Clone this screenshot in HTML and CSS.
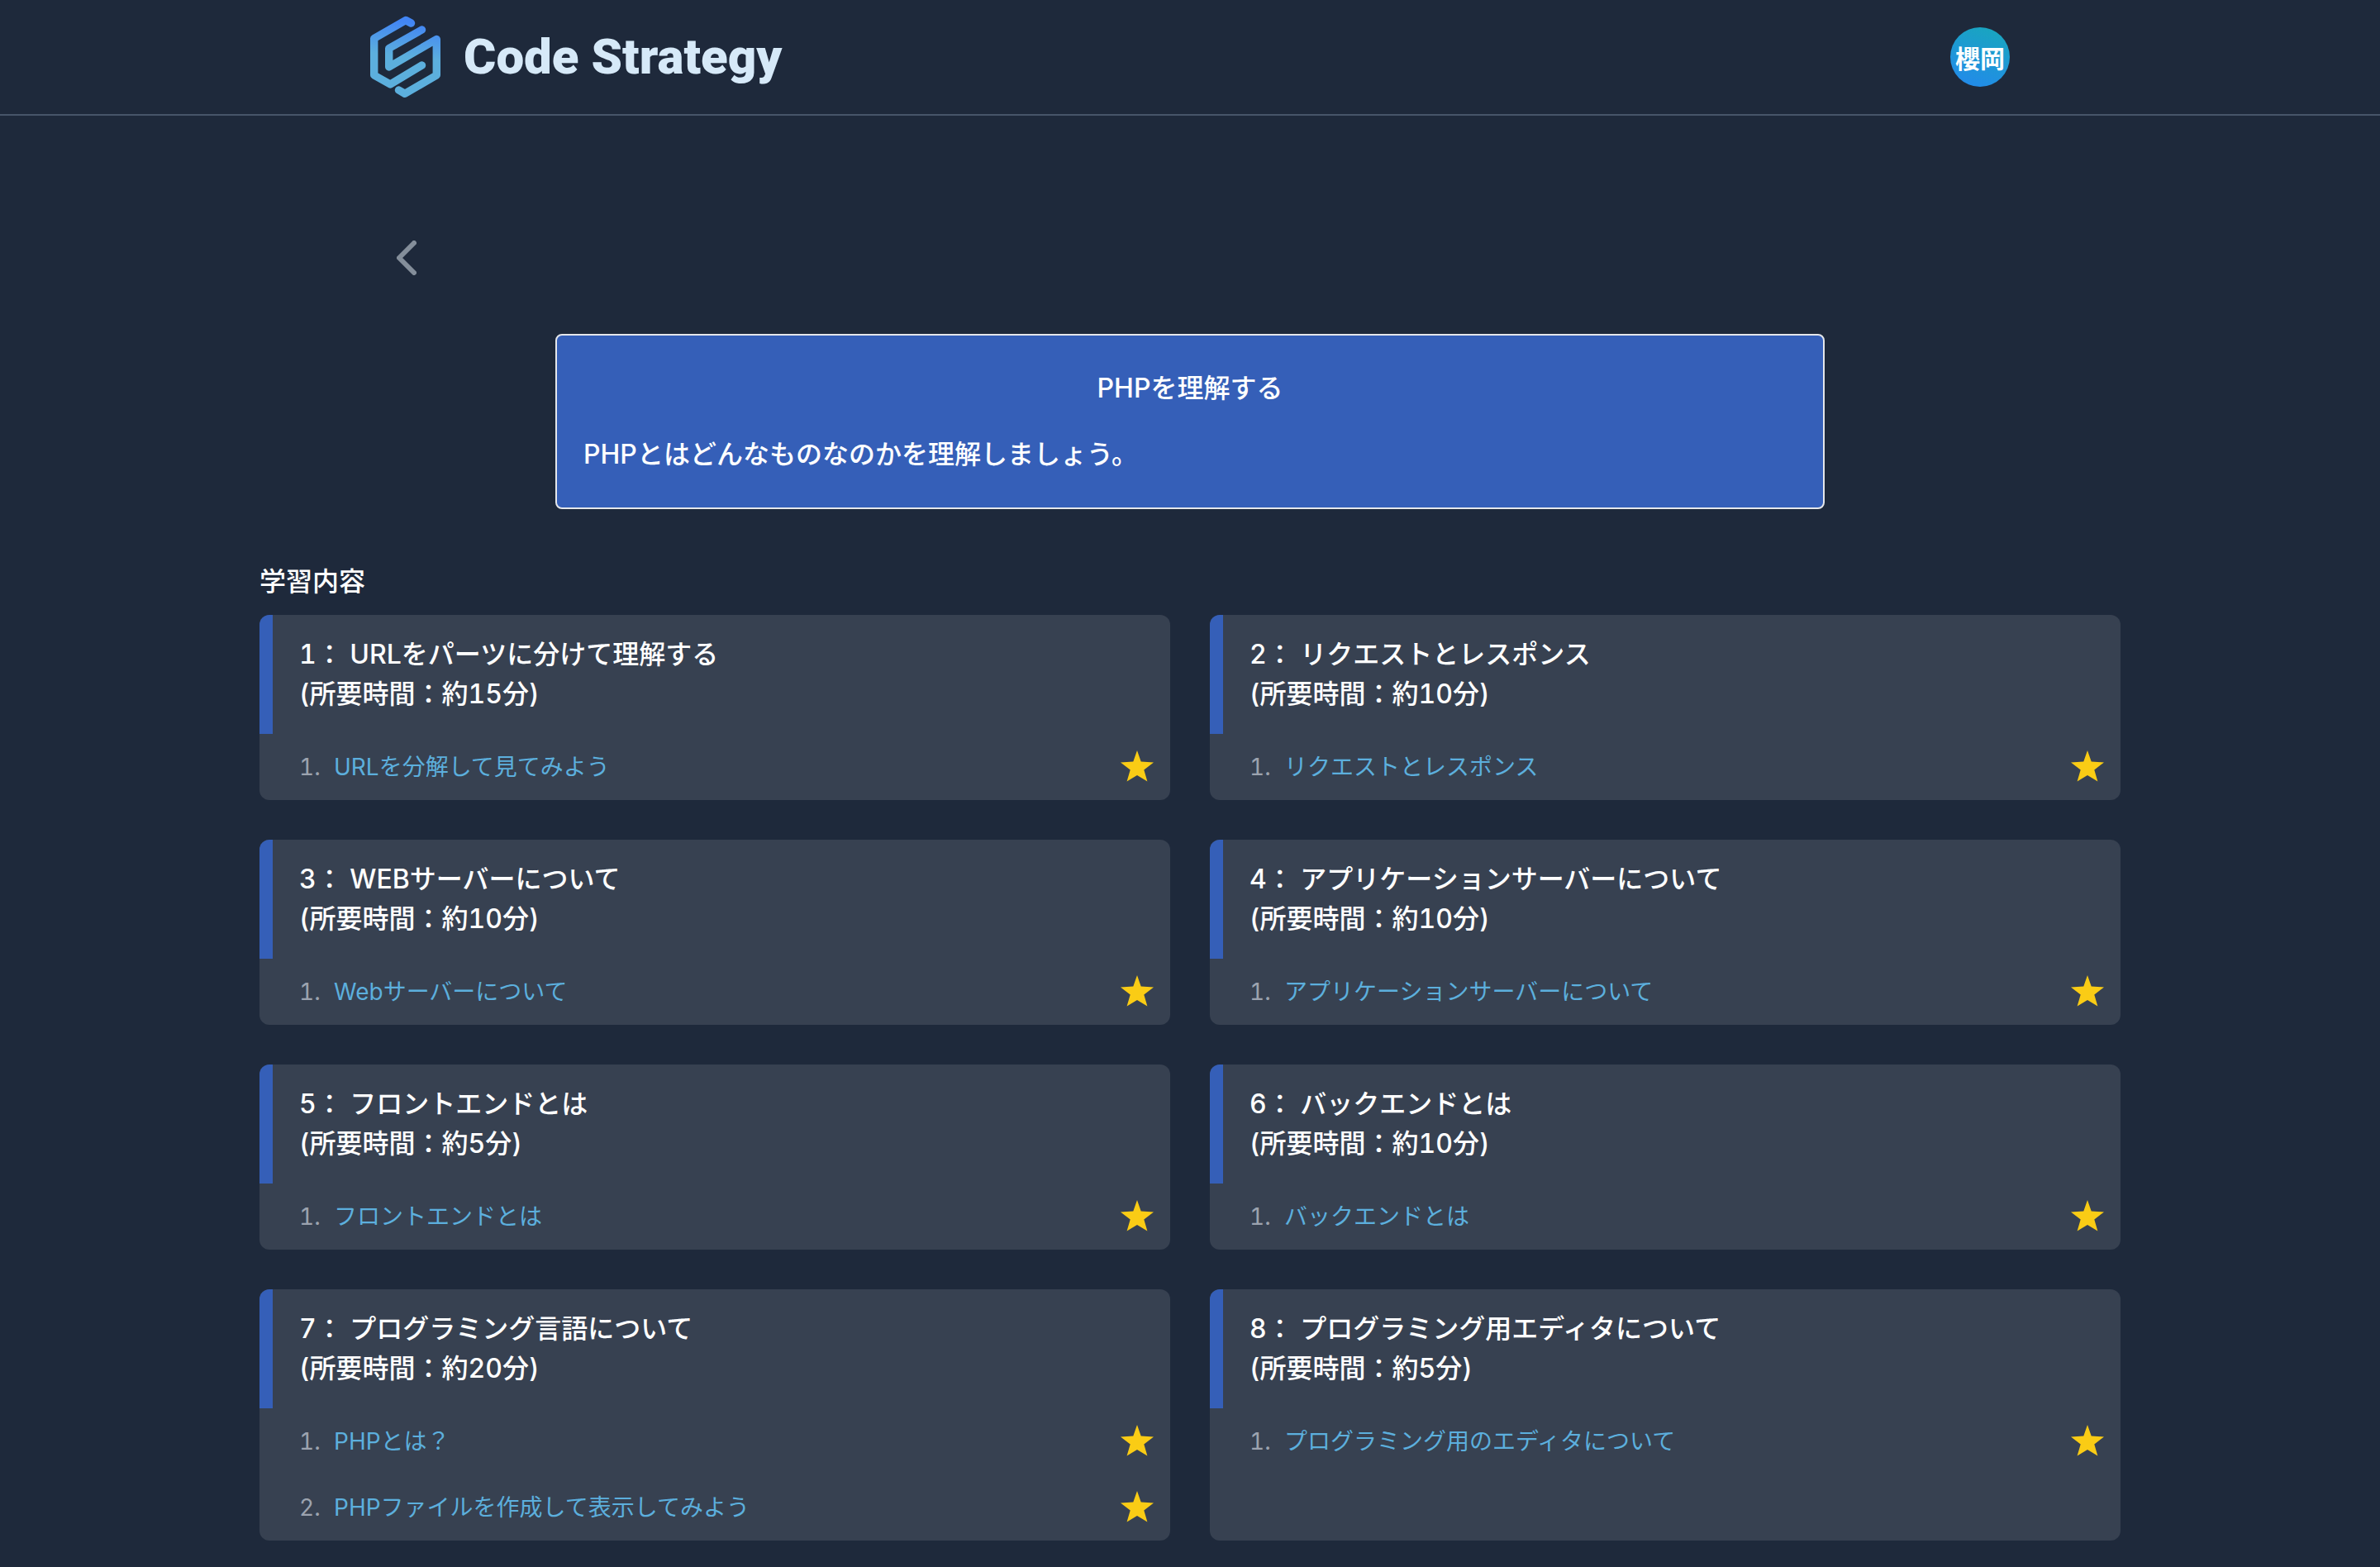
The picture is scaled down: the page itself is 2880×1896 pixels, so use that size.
FILE: index.html
```html
<!DOCTYPE html>
<html lang="ja">
<head>
<meta charset="utf-8">
<meta name="viewport" content="width=device-width, initial-scale=1">
<title>PHPを理解する | Code Strategy</title>
<link rel="stylesheet" href="styles.css">
</head>
<body>
<svg class="sprite" aria-hidden="true">
  <symbol id="star" viewBox="0 0 40 40"><path d="M20 0 24.700 13.600 40 14.400 28.300 23.400 32.400 37.600 20 30 7.600 37.600 11.700 23.400 0 14.400 15.300 13.600Z"/></symbol>
</svg>
<header class="site-header">
  <div class="header-inner">
    <a class="brand" href="#">
      <svg class="brand-mark" viewBox="0 0 85 100" aria-hidden="true">
        <defs><linearGradient id="mark" gradientUnits="userSpaceOnUse" x1="52" y1="0" x2="40" y2="100"><stop offset="0.080" stop-color="#4285f4"/><stop offset="0.500" stop-color="#5cafdd"/><stop offset="1" stop-color="#5cafdd"/></linearGradient></defs>
        <g fill="none" stroke="url(#mark)" stroke-width="9.400" stroke-linejoin="round" stroke-linecap="round">
          <path d="M49.500 9 43 5.500 4.700 27.500V72L24.300 83 62.500 60"/>
          <path d="M62.500 17 22.700 39.500V62L80.300 28.500V72L42 94.300 34.500 90"/>
        </g>
      </svg>
      <span class="brand-name">Code Strategy</span>
    </a>
    <button class="avatar" type="button">櫻岡</button>
  </div>
</header>
<main class="page">
  <nav class="back-row">
    <a class="back" href="#" aria-label="戻る"><svg viewBox="0 0 24 42" aria-hidden="true"><path d="M21 3 3 21 21 39"/></svg></a>
  </nav>
  <section class="intro">
    <h1>PHPを理解する</h1>
    <p>PHPとはどんなものなのかを理解しましょう。</p>
  </section>
  <section class="contents">
    <h2>学習内容</h2>
    <div class="grid">
      <article class="card">
        <h3>1： URLをパーツに分けて理解する<br>(所要時間：約15分)</h3>
        <ol><li><a href="#">URLを分解して見てみよう</a><svg class="star"><use href="#star"/></svg></li></ol>
      </article>
      <article class="card">
        <h3>2： リクエストとレスポンス<br>(所要時間：約10分)</h3>
        <ol><li><a href="#">リクエストとレスポンス</a><svg class="star"><use href="#star"/></svg></li></ol>
      </article>
      <article class="card">
        <h3>3： WEBサーバーについて<br>(所要時間：約10分)</h3>
        <ol><li><a href="#">Webサーバーについて</a><svg class="star"><use href="#star"/></svg></li></ol>
      </article>
      <article class="card">
        <h3>4： アプリケーションサーバーについて<br>(所要時間：約10分)</h3>
        <ol><li><a href="#">アプリケーションサーバーについて</a><svg class="star"><use href="#star"/></svg></li></ol>
      </article>
      <article class="card">
        <h3>5： フロントエンドとは<br>(所要時間：約5分)</h3>
        <ol><li><a href="#">フロントエンドとは</a><svg class="star"><use href="#star"/></svg></li></ol>
      </article>
      <article class="card">
        <h3>6： バックエンドとは<br>(所要時間：約10分)</h3>
        <ol><li><a href="#">バックエンドとは</a><svg class="star"><use href="#star"/></svg></li></ol>
      </article>
      <article class="card">
        <h3>7： プログラミング言語について<br>(所要時間：約20分)</h3>
        <ol>
          <li><a href="#">PHPとは？</a><svg class="star"><use href="#star"/></svg></li>
          <li><a href="#">PHPファイルを作成して表示してみよう</a><svg class="star"><use href="#star"/></svg></li>
        </ol>
      </article>
      <article class="card">
        <h3>8： プログラミング用エディタについて<br>(所要時間：約5分)</h3>
        <ol><li><a href="#">プログラミング用のエディタについて</a><svg class="star"><use href="#star"/></svg></li></ol>
      </article>
    </div>
  </section>
</main>
</body>
</html>
```
FILE: styles.css
```css
* { box-sizing: border-box; }

body {
  margin: 0;
  background: #1e293b;
  color: #fff;
  font: 500 32px/48px Inter, "Noto Sans CJK JP", sans-serif;
  font-variant-numeric: tabular-nums;
}

h1, h2, h3, p, ol { margin: 0; padding: 0; font-size: 32px; font-weight: 500; }
a { text-decoration: none; }
.sprite { display: none; }

.site-header { border-bottom: 2px solid #475569; }
.header-inner {
  display: flex;
  align-items: center;
  justify-content: space-between;
  max-width: 2048px;
  height: 138px;
  margin: 0 auto;
  padding: 0 32px;
}
.brand { display: flex; align-items: center; gap: 28px; color: #d6e9f8; }
.brand-mark { width: 85px; height: 100px; }
.brand-name { font: 900 60px/72px Roboto, sans-serif; }
.avatar {
  width: 72px;
  height: 72px;
  padding: 0;
  border: 0;
  border-radius: 50%;
  background: linear-gradient(20deg, #2388ee, #18a8bb);
  color: #fff;
  font: 700 30px/40px "Noto Sans CJK JP", sans-serif;
}

.page { padding: 128px 32px 32px; }
.back-row { max-width: 1920px; margin: 0 auto; height: 136px; }
.back { display: flex; width: 24px; padding-top: 23px; }
.back svg { width: 24px; height: 42px; fill: none; stroke: #848e9a; stroke-width: 6px; stroke-linecap: round; stroke-linejoin: round; }

.intro {
  max-width: 1536px;
  margin: 0 auto;
  padding: 40px 32px;
  border: 2px solid #e5e7eb;
  border-radius: 8px;
  background: #355fb8;
}
.intro h1 { margin-bottom: 32px; text-align: center; }

.contents { max-width: 2252px; margin: 64px auto 0; }
.contents h2 { margin-bottom: 16px; }
.grid { display: grid; grid-template-columns: 1fr 1fr; gap: 48px; }
.card { overflow: hidden; border-radius: 12px; background: #374151; }
.card h3 { padding: 24px 32px; border-left: 16px solid #355fb8; }
.card ol { list-style: none; counter-reset: item; font-weight: 400; }
.card li {
  display: flex;
  align-items: center;
  height: 80px;
  padding: 0 20px 0 48px;
  color: #9ca3af;
  font-size: 28px;
  line-height: 40px;
  counter-increment: item;
}
.card li::before { content: counter(item) "."; width: 42px; }
.card li a { flex: 1; color: #5cafdd; }
.star { width: 40px; height: 40px; fill: #facc15; }
```
